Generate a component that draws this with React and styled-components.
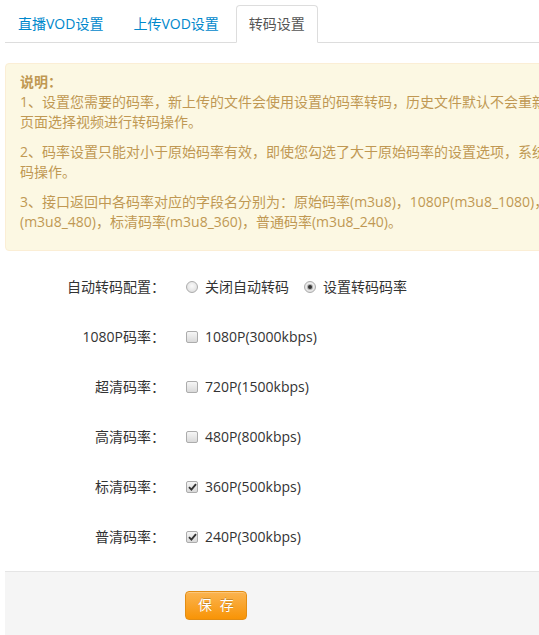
import React from 'react';
import styled, { createGlobalStyle } from 'styled-components';

const Global = createGlobalStyle`
  html, body { margin: 0; padding: 0; overflow: hidden; background: #fff; }
  body {
    font-family: "Open Sans", "Noto Sans CJK SC", sans-serif;
    font-size: 14px;
    line-height: 20px;
    color: #333;
  }
  #root { width: 1000px; }
`;

const Page = styled.div`
  padding: 5px 0 0 5px;
  width: 995px;
`;

const Tabs = styled.ul`
  display: flex;
  gap: 4px;
  list-style: none;
  margin: 0 0 20px;
  padding: 0;
  border-bottom: 1px solid #ddd;
`;

const Tab = styled.li`
  margin-bottom: -1px;
  padding: 8px 12px;
  line-height: 20px;
  font-size: 14px;
  border: 1px solid ${(p) => (p.$active ? '#ddd' : 'transparent')};
  border-bottom-color: ${(p) => (p.$active ? '#fff' : 'transparent')};
  border-radius: 4px 4px 0 0;
  background: ${(p) => (p.$active ? '#fff' : 'transparent')};
  color: ${(p) => (p.$active ? '#555' : '#0088cc')};
  cursor: pointer;
`;

const Alert = styled.div`
  background: #fcf8e3;
  border: 1px solid #fbeed5;
  border-radius: 4px;
  padding: 8px 35px 8px 14px;
  margin-bottom: 21px;
  color: #c09853;
`;

const AlertTitle = styled.div`
  font-weight: bold;
`;

const Para = styled.p`
  margin: 0 0 10px;
  white-space: nowrap;
`;

const Form = styled.div``;

const Row = styled.div`
  display: flex;
  align-items: center;
  height: 30px;
  margin-bottom: ${(p) => (p.$last ? '19px' : '20px')};
`;

const Label = styled.div`
  width: 160px;
  flex-shrink: 0;
  text-align: right;
`;

const Controls = styled.div`
  margin-left: 20px;
  display: flex;
  align-items: center;
`;

const Option = styled.label`
  display: inline-flex;
  align-items: center;
  margin-right: 14px;
  cursor: pointer;
`;

const RadioBox = styled.span`
  width: 12px;
  height: 12px;
  box-sizing: border-box;
  margin: 0 7px 0 1px;
  border-radius: 50%;
  border: 1px solid #acacac;
  background: radial-gradient(circle at 50% 40%, #fafafa 0%, #e4e4e4 65%, #d4d4d4 100%);
  display: inline-flex;
  align-items: center;
  justify-content: center;
  &::after {
    content: '';
    width: 4px;
    height: 4px;
    border-radius: 50%;
    background: ${(p) => (p.$checked ? '#333' : 'transparent')};
    box-shadow: ${(p) => (p.$checked ? '0 0 0 1px rgba(60,60,60,0.35)' : 'none')};
  }
`;

const CheckBox = styled.span`
  width: 12px;
  height: 12px;
  box-sizing: border-box;
  margin: 0 7px 0 1px;
  border-radius: 2px;
  border: 1px solid #acacac;
  background: linear-gradient(#f6f6f6, #d9d9d9);
  display: inline-flex;
  align-items: center;
  justify-content: center;
  svg { display: block; }
`;

const Actions = styled.div`
  background: #f5f5f5;
  border-top: 1px solid #e5e5e5;
  padding: 19px 20px 20px 180px;
  height: 60px;
`;

const SaveButton = styled.button`
  font-family: "Open Sans", "Noto Sans CJK SC", sans-serif;
  font-size: 14px;
  line-height: 20px;
  height: 29px;
  padding: 3px 10px 4px 12px;
  letter-spacing: 2px;
  color: #fff;
  text-shadow: 0 -1px 0 rgba(0, 0, 0, 0.2);
  background: linear-gradient(#fbb450, #f89406);
  border: 1px solid #e38d13;
  border-radius: 4px;
  box-shadow: inset 0 1px 0 rgba(255, 255, 255, 0.25);
  cursor: pointer;
`;

const Radio = ({ checked, children }) => (
  <Option>
    <RadioBox $checked={checked} />
    {children}
  </Option>
);

const Check = ({ checked, children }) => (
  <Option>
    <CheckBox>
      {checked && (
        <svg width="9" height="8" viewBox="0 0 9 8">
          <path d="M1 4.2 L3.4 6.6 L8 1.2" fill="none" stroke="#333" strokeWidth="1.9" />
        </svg>
      )}
    </CheckBox>
    {children}
  </Option>
);

const rates = [
  { label: '1080P码率：', text: '1080P(3000kbps)', checked: false },
  { label: '超清码率：', text: '720P(1500kbps)', checked: false },
  { label: '高清码率：', text: '480P(800kbps)', checked: false },
  { label: '标清码率：', text: '360P(500kbps)', checked: true },
  { label: '普清码率：', text: '240P(300kbps)', checked: true },
];

export default function App() {
  return (
    <>
      <Global />
      <Page>
        <Tabs>
          <Tab>直播VOD设置</Tab>
          <Tab>上传VOD设置</Tab>
          <Tab $active>转码设置</Tab>
        </Tabs>
        <Alert>
          <AlertTitle>说明：</AlertTitle>
          <Para>
            1、设置您需要的码率，新上传的文件会使用设置的码率转码，历史文件默认不会重新转码，如需转码请到视频管理
            <br />
            页面选择视频进行转码操作。
          </Para>
          <Para>
            2、码率设置只能对小于原始码率有效，即使您勾选了大于原始码率的设置选项，系统也不会进行转
            <br />
            码操作。
          </Para>
          <Para>
            3、接口返回中各码率对应的字段名分别为：原始码率(m3u8)，1080P(m3u8_1080)，超清码率(m3u8_720)，高清码率
            <br />
            (m3u8_480)，标清码率(m3u8_360)，普通码率(m3u8_240)。
          </Para>
        </Alert>
        <Form>
          <Row>
            <Label>自动转码配置：</Label>
            <Controls>
              <Radio>关闭自动转码</Radio>
              <Radio checked>设置转码码率</Radio>
            </Controls>
          </Row>
          {rates.map((r, i) => (
            <Row key={r.label} $last={i === rates.length - 1}>
              <Label>{r.label}</Label>
              <Controls>
                <Check checked={r.checked}>{r.text}</Check>
              </Controls>
            </Row>
          ))}
          <Actions>
            <SaveButton>保 存</SaveButton>
          </Actions>
        </Form>
      </Page>
    </>
  );
}
